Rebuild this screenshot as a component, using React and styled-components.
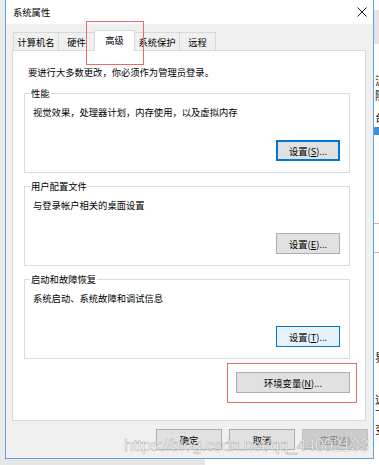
import React from 'react';
import styled, { createGlobalStyle } from 'styled-components';

const GlobalStyle = createGlobalStyle`
  html, body {
    margin: 0;
    padding: 0;
  }
  body {
    font-family: "Noto Sans CJK SC", "Microsoft YaHei", sans-serif;
    font-size: 9.3px;
    color: #000;
  }
`;

const Screen = styled.div`
  position: relative;
  width: 379px;
  height: 465px;
  overflow: hidden;
  display: grid;
  grid-template-columns: 5px 369px 1fr;
  grid-template-rows: 459px 1fr;
  background: #fff;
`;

const LeftGutter = styled.div`
  background: #ebebeb;
`;

const RightStrip = styled.div`
  display: flex;
  flex-direction: column;
  overflow: hidden;
  background: #fff;
  padding-left: 1px;
`;

const StripBlock = styled.div`
  height: ${(p) => p.$h}px;
  margin-top: ${(p) => p.$top || 0}px;
  background: ${(p) => p.$bg};
  margin-left: -1px;
`;

const StripChar = styled.div`
  margin-top: ${(p) => p.$top}px;
  font-size: 11px;
  line-height: 12px;
  white-space: nowrap;
  color: #111;
`;

const BottomStrip = styled.div`
  grid-column: 1 / -1;
  display: flex;
`;

const BottomGrey = styled.div`
  width: 205px;
  background: #e6e6e6;
`;

const BottomText = styled.div`
  flex: 1;
  padding-left: 120px;
  font-size: 11px;
  line-height: 12px;
  color: #222;
  white-space: nowrap;
  overflow: hidden;
`;

const Window = styled.div`
  display: flex;
  flex-direction: column;
  border: 1px solid #5ea4e2;
  border-top: none;
  background: #f0f0f0;
`;

const TitleBar = styled.div`
  height: 24px;
  flex: none;
  display: flex;
  align-items: center;
  justify-content: space-between;
  padding: 0 6px 0 7px;
  background: #fff;
  line-height: 12px;
`;

const Body = styled.div`
  flex: 1;
  display: flex;
  flex-direction: column;
  padding: 6px 7px 8px 6px;
`;

const TabRow = styled.div`
  display: flex;
  align-items: flex-end;
  height: 20px;
  padding-left: 1px;
`;

const Tab = styled.div`
  box-sizing: border-box;
  width: ${(p) => p.$w}px;
  height: ${(p) => (p.$active ? 21 : 18)}px;
  margin-bottom: ${(p) => (p.$active ? -1 : 0)}px;
  padding-bottom: ${(p) => (p.$active ? 2 : 0)}px;
  display: flex;
  align-items: center;
  justify-content: center;
  line-height: 12px;
  background: ${(p) => (p.$active ? '#fff' : '#f0f0f0')};
  border: 1px solid #d9d9d9;
  border-bottom: none;
  border-right: ${(p) => (p.$active || p.$last ? '1px solid #d9d9d9' : 'none')};
  border-left: ${(p) => (p.$afterActive ? 'none' : '1px solid #d9d9d9')};
  position: relative;
  z-index: ${(p) => (p.$active ? 1 : 0)};
`;

const Panel = styled.div`
  flex: none;
  display: flex;
  flex-direction: column;
  background: #fff;
  border: 1px solid #d9d9d9;
  padding: 15px 15px 27px 11px;
`;

const Intro = styled.div`
  line-height: 12px;
  padding-left: 4px;
`;

const Group = styled.fieldset`
  margin: ${(p) => p.$gap}px 0 0;
  min-width: 0;
  border: 1px solid #dcdcdc;
  padding: 7px 9px 11px 8px;
`;

const Legend = styled.legend`
  padding: 0 1px;
  margin-left: -3px;
  line-height: 12px;
`;

const Desc = styled.div`
  line-height: 12px;
`;

const ButtonRow = styled.div`
  display: flex;
  justify-content: flex-end;
  gap: 7px;
  margin-top: ${(p) => p.$gap}px;
  margin-right: ${(p) => p.$shift || 0}px;
`;

const variants = {
  normal: 'background: #e1e1e1; border: 1px solid #adadad; color: #000;',
  focus: 'background: #e1e1e1; border: 1px solid #0078d7; box-shadow: inset 0 0 0 1px #0078d7; color: #000;',
  hover: 'background: #e5f1fb; border: 1px solid #0078d7; color: #000;',
  disabled: 'background: #cccccc; border: 1px solid #bfbfbf; color: #838383;',
};

const Button = styled.button`
  box-sizing: border-box;
  width: ${(p) => p.$w}px;
  height: 21px;
  padding: 0;
  font: inherit;
  font-size: 9.3px;
  line-height: 12px;
  ${(p) => variants[p.$variant || 'normal']}

  u {
    text-decoration-thickness: 1px;
    text-underline-offset: 1px;
  }
`;

const Annotation = styled.div`
  position: absolute;
  left: ${(p) => p.$x}px;
  top: ${(p) => p.$y}px;
  width: ${(p) => p.$w}px;
  height: ${(p) => p.$h}px;
  border: 1px solid #ec6a6a;
  box-sizing: border-box;
  pointer-events: none;
`;

const Watermark = styled.div`
  position: absolute;
  left: 124px;
  top: 437px;
  font-family: "Liberation Sans", Arial, sans-serif;
  font-size: 17px;
  line-height: 17px;
  letter-spacing: -0.5px;
  color: rgba(255, 255, 255, 0.9);
  -webkit-text-stroke: 0.6px rgba(120, 120, 120, 0.5);
  white-space: nowrap;
  pointer-events: none;
`;

const CloseIcon = () => (
  <svg width="10" height="10" viewBox="0 0 10 10">
    <path d="M0.5 0.5 L9.5 9.5 M9.5 0.5 L0.5 9.5" stroke="#111" strokeWidth="1" />
  </svg>
);

const tabs = [
  { label: '计算机名', w: 45 },
  { label: '硬件', w: 36 },
  { label: '高级', w: 41, active: true },
  { label: '系统保护', w: 44 },
  { label: '远程', w: 37 },
];

const groups = [
  { title: '性能', desc: '视觉效果，处理器计划，内存使用，以及虚拟内存', key: 'S', variant: 'focus', gap: 9 },
  { title: '用户配置文件', desc: '与登录帐户相关的桌面设置', key: 'E', variant: 'normal', gap: 7 },
  { title: '启动和故障恢复', desc: '系统启动、系统故障和调试信息', key: 'T', variant: 'hover', gap: 7 },
];

export default function App() {
  return (
    <>
      <GlobalStyle />
      <Screen>
        <LeftGutter />
        <Window>
          <TitleBar>
            <span>系统属性</span>
            <CloseIcon />
          </TitleBar>
          <Body>
            <TabRow>
              {tabs.map((t, i) => (
                <Tab
                  key={t.label}
                  $w={t.w}
                  $active={t.active}
                  $last={i === tabs.length - 1}
                  $afterActive={i > 0 && tabs[i - 1].active}
                >
                  {t.label}
                </Tab>
              ))}
            </TabRow>
            <Panel>
              <Intro>要进行大多数更改，你必须作为管理员登录。</Intro>
              {groups.map((g) => (
                <Group key={g.title} $gap={g.gap}>
                  <Legend>{g.title}</Legend>
                  <Desc>{g.desc}</Desc>
                  <ButtonRow $gap={22}>
                    <Button $w={64} $variant={g.variant}>
                      设置(<u>{g.key}</u>)...
                    </Button>
                  </ButtonRow>
                </Group>
              ))}
              <ButtonRow $gap={13}>
                <Button $w={114}>
                  环境变量(<u>N</u>)...
                </Button>
              </ButtonRow>
            </Panel>
            <ButtonRow $gap={8} $shift={-2}>
              <Button $w={66}>确定</Button>
              <Button $w={66}>取消</Button>
              <Button $w={66} $variant="disabled">
                应用(<u>A</u>)
              </Button>
            </ButtonRow>
          </Body>
        </Window>
        <RightStrip>
          <StripBlock $h={34} $top={10} $bg="#e4e4e4" />
          <StripChar $top={30}>泥</StripChar>
          <StripChar $top={3}>随</StripChar>
          <StripChar $top={10}>台</StripChar>
          <StripBlock $h={8} $top={4} $bg="#3d8fd6" />
          <StripBlock $h={1} $top={88} $bg="#f0a0a0" />
          <StripBlock $h={1} $top={28} $bg="#f0a0a0" />
          <StripChar $top={98}>界</StripChar>
          <StripChar $top={30}>这</StripChar>
          <StripChar $top={3}>下</StripChar>
          <StripChar $top={3}>变</StripChar>
        </RightStrip>
        <BottomStrip>
          <BottomGrey />
          <BottomText>—— —— ——</BottomText>
        </BottomStrip>
        <Annotation $x={86} $y={21} $w={58} $h={44} />
        <Annotation $x={227} $y={363} $w={130} $h={40} />
        <Watermark>https://blog.csdn.net/qq_44002133</Watermark>
      </Screen>
    </>
  );
}
